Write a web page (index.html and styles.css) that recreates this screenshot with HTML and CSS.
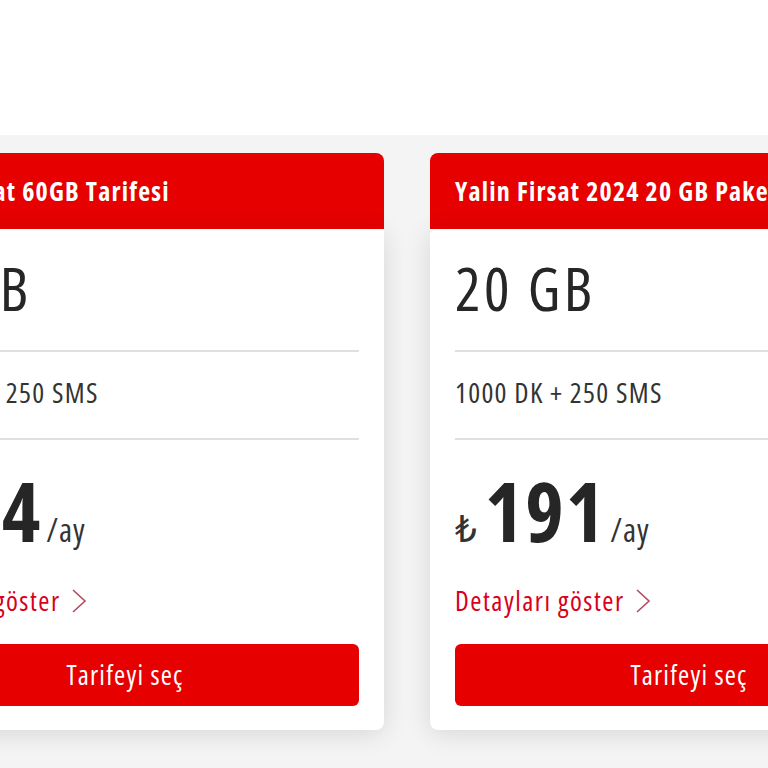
FILE: index.html
```html
<!DOCTYPE html>
<html lang="tr">
<head>
    <meta charset="UTF-8">
    <meta name="viewport" content="width=device-width, initial-scale=1.0">
    <title>Tarifeler</title>
    <link rel="stylesheet" href="styles.css">
</head>
<body>
    <div class="hero"></div>

    <div class="plans">
        <div class="plans-track">
            <div class="plan-card">
                <div class="plan-header">Yalin Firsat 60GB Tarifesi</div>
                <div class="plan-body">
                    <div class="plan-data">60 GB</div>
                    <div class="plan-minutes">1000 DK + 250 SMS</div>
                    <div class="plan-price">
                        <span class="currency">₺</span><span class="amount">214</span><span class="period">/ay</span>
                    </div>
                    <a class="plan-link" href="#">Detayları göster
                        <svg width="18" height="26" viewBox="0 0 18 26"><polyline points="3,2 15,13 3,24" fill="none" stroke="#b8485c" stroke-width="1.6"/></svg>
                    </a>
                    <button class="plan-btn">Tarifeyi seç</button>
                </div>
            </div>

            <div class="plan-card">
                <div class="plan-header">Yalin Firsat 2024 20 GB Paketi</div>
                <div class="plan-body">
                    <div class="plan-data">20 GB</div>
                    <div class="plan-minutes">1000 DK + 250 SMS</div>
                    <div class="plan-price">
                        <span class="currency">₺</span><span class="amount">191</span><span class="period">/ay</span>
                    </div>
                    <a class="plan-link" href="#">Detayları göster
                        <svg width="18" height="26" viewBox="0 0 18 26"><polyline points="3,2 15,13 3,24" fill="none" stroke="#b8485c" stroke-width="1.6"/></svg>
                    </a>
                    <button class="plan-btn">Tarifeyi seç</button>
                </div>
            </div>
        </div>
    </div>
</body>
</html>
```

FILE: styles.css
```css
body {
    margin: 0;
    font-family: 'Open Sans', 'Liberation Sans', sans-serif;
    font-stretch: 75%;
    color: #262626;
    background: #f4f4f4;
}

.hero {
    height: 135px;
    background: #fff;
}

.plans {
    overflow: hidden;
    padding-top: 18px;
    padding-bottom: 40px;
}

.plans-track {
    display: flex;
    gap: 46px;
    transform: translateX(-134px);
}

.plan-card {
    flex: 0 0 518px;
}

.plan-header {
    height: 76px;
    display: flex;
    align-items: center;
    padding: 0 25px;
    background: #e60000;
    color: #fff;
    font-size: 26px;
    font-weight: bold;
    letter-spacing: 1.2px;
    white-space: nowrap;
    border-radius: 8px 8px 0 0;
}

.plan-body {
    background: #fff;
    padding: 29px 25px 24px;
    border-radius: 0 0 8px 8px;
    box-shadow: 0 4px 26px rgba(0,0,0,0.12);
}

.plan-data {
    font-size: 60px;
    letter-spacing: 3.5px;
    line-height: 1;
    padding-bottom: 32px;
    border-bottom: 2px solid #e0e0e0;
}

.plan-minutes {
    font-size: 28px;
    letter-spacing: 1.3px;
    line-height: 1.2;
    padding: 24px 0 28px;
    border-bottom: 2px solid #e0e0e0;
    color: #333;
}

.plan-price {
    padding-top: 29px;
    line-height: 1;
    display: flex;
    align-items: baseline;
}

.currency {
    font-family: 'DejaVu Sans', sans-serif;
    font-size: 38px;
    margin-right: 8px;
    color: #333;
}

.amount {
    font-size: 82px;
    font-weight: bold;
    letter-spacing: 2px;
}

.period {
    font-size: 32px;
    letter-spacing: 1px;
    margin-left: 4px;
    color: #333;
}

.plan-link {
    display: flex;
    align-items: center;
    gap: 9px;
    margin-top: 34px;
    font-size: 27px;
    letter-spacing: 1.5px;
    line-height: 1.2;
    color: #d8001b;
    text-decoration: none;
}

.plan-btn {
    display: block;
    width: 100%;
    height: 62px;
    margin-top: 27px;
    border: none;
    border-radius: 6px;
    background: #e60000;
    color: #fff;
    font-family: inherit;
    font-stretch: inherit;
    font-size: 27px;
    letter-spacing: 1.2px;
    cursor: pointer;
}
```
